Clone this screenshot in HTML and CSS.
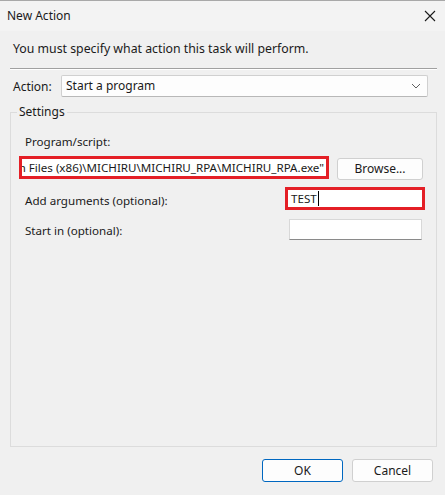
FILE: index.html
```html
<!DOCTYPE html>
<html lang="en">
<head>
    <meta charset="UTF-8">
    <title>New Action</title>
    <link rel="stylesheet" href="styles.css">
</head>
<body>
    <div id="dialog">
        <div class="titlebar">
            <span class="title">New Action</span>
            <svg class="close" width="12" height="12" viewBox="0 0 12 12">
                <path d="M1 1 L11 11 M11 1 L1 11" stroke="#1a1a1a" stroke-width="1.1" fill="none"/>
            </svg>
        </div>
        <div class="content">
            <p class="intro">You must specify what action this task will perform.</p>
            <div class="sep"></div>
            <div class="action-row">
                <label>Action:</label>
                <div class="select">
                    <span>Start a program</span>
                    <svg width="10" height="6" viewBox="0 0 10 6">
                        <path d="M1 1 L5 5 L9 1" stroke="#606060" stroke-width="1" fill="none"/>
                    </svg>
                </div>
            </div>
            <fieldset class="settings">
                <legend>Settings</legend>
                <div class="label first">Program/script:</div>
                <div class="row">
                    <div class="field path mark">
                        <span>"C:\Program Files (x86)\MICHIRU\MICHIRU_RPA\MICHIRU_RPA.exe"</span>
                    </div>
                    <button class="btn browse">Browse...</button>
                </div>
                <div class="row line">
                    <span class="label">Add arguments (optional):</span>
                    <div class="field args mark">TEST<i class="caret"></i></div>
                </div>
                <div class="row line">
                    <span class="label">Start in (optional):</span>
                    <div class="field start"></div>
                </div>
            </fieldset>
        </div>
        <div class="footer">
            <button class="btn ok">OK</button>
            <button class="btn">Cancel</button>
        </div>
    </div>
</body>
</html>
```

FILE: styles.css
```css
*{
    margin: 0;
    padding: 0;
    box-sizing: border-box;
}
body{
    font-family: "Noto Sans", "Liberation Sans", sans-serif;
    font-size: 11.6px;
    line-height: 16px;
    color: #1a1a1a;
    background: #f0f0f0;
}
#dialog{
    width: 445px;
    height: 495px;
    display: flex;
    flex-direction: column;
}
.titlebar{
    height: 31px;
    border-top: 1px solid #a8a8a8;
    background: #f3f3f3;
    display: flex;
    align-items: center;
    justify-content: space-between;
    padding: 0 9px 0 7px;
}
.title{
    font-size: 12px;
}
.content{
    flex: 1;
    display: flex;
    flex-direction: column;
    padding: 0 8px 0 10px;
}
.intro{
    margin-top: 10px;
    padding-left: 3px;
    font-size: 12.3px;
}
.sep{
    margin-top: 11px;
    height: 2px;
    border-top: 1px solid #a0a0a0;
    border-bottom: 1px solid #fff;
}
.action-row{
    display: flex;
    align-items: center;
    margin-top: 5px;
    padding-left: 3px;
}
.action-row label{
    width: 48px;
    padding-top: 2px;
    font-size: 12px;
}
.select{
    width: 367px;
    height: 22px;
    background: #fdfdfd;
    border: 1px solid #d0d0d0;
    border-bottom-color: #b8b8b8;
    border-radius: 2px;
    display: flex;
    align-items: center;
    justify-content: space-between;
    padding: 0 6px 0 4px;
    font-size: 12px;
}
.settings{
    flex: 1;
    margin-top: 7px;
    border: 1px solid #dcdcdc;
    padding: 0 8px;
    min-width: 0;
}
.settings legend{
    margin-left: -2px;
    padding: 0 2px;
    font-size: 12px;
}
.label{
    padding-left: 6px;
}
.label.first{
    margin-top: 14px;
}
.row{
    display: flex;
    align-items: center;
    margin-top: 5px;
}
.row.line{
    justify-content: space-between;
    margin-top: 7px;
}
.row.line .label{
    padding-top: 5px;
}
.field{
    background: #fff;
    border: 1px solid #d8d8d8;
    border-bottom-color: #8a8a8a;
    display: flex;
    align-items: center;
}
/* red outline around the edited fields */
.mark{
    border: 3px solid #e41f26;
}
.path{
    width: 310px;
    height: 23px;
    justify-content: flex-end;
    overflow: hidden;
    white-space: nowrap;
    padding-right: 2px;
}
.args{
    width: 140px;
    height: 23px;
    margin-right: 3px;
    padding-left: 3px;
}
.caret{
    display: inline-block;
    width: 1px;
    height: 15px;
    background: #000;
    margin-left: 1px;
}
.start{
    width: 133px;
    height: 21px;
    margin-right: 6px;
    margin-top: 2px;
}
.btn{
    font: inherit;
    font-size: 12px;
    color: #1a1a1a;
    width: 81px;
    height: 23px;
    background: #fdfdfd;
    border: 1px solid #d0d0d0;
    border-radius: 3px;
}
.browse{
    width: 86px;
    height: 22px;
    margin-left: 8px;
    margin-top: 3px;
}
.footer{
    display: flex;
    justify-content: flex-end;
    gap: 9px;
    padding: 12px 12px 13px 0;
}
.ok{
    border-color: #0067c0;
}
```
